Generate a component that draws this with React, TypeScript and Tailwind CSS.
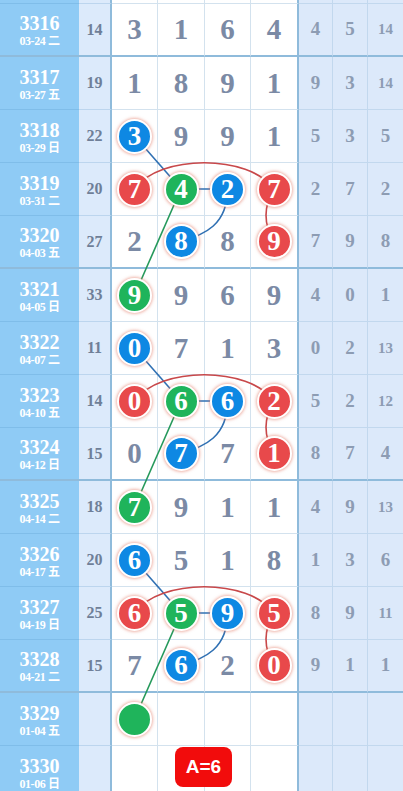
import React from 'react';

type Row = {
  id: string;
  date: string;
  sum: number | null;
  nums: (number | null)[];
  balls: string[];
  tail: number[];
};

const ROWS: Row[] = [
  { id: '3316', date: '03-24 二', sum: 14, nums: [3, 1, 6, 4], balls: ['', '', '', ''], tail: [4, 5, 14] },
  { id: '3317', date: '03-27 五', sum: 19, nums: [1, 8, 9, 1], balls: ['', '', '', ''], tail: [9, 3, 14] },
  { id: '3318', date: '03-29 日', sum: 22, nums: [3, 9, 9, 1], balls: ['b', '', '', ''], tail: [5, 3, 5] },
  { id: '3319', date: '03-31 二', sum: 20, nums: [7, 4, 2, 7], balls: ['r', 'g', 'b', 'r'], tail: [2, 7, 2] },
  { id: '3320', date: '04-03 五', sum: 27, nums: [2, 8, 8, 9], balls: ['', 'b', '', 'r'], tail: [7, 9, 8] },
  { id: '3321', date: '04-05 日', sum: 33, nums: [9, 9, 6, 9], balls: ['g', '', '', ''], tail: [4, 0, 1] },
  { id: '3322', date: '04-07 二', sum: 11, nums: [0, 7, 1, 3], balls: ['b', '', '', ''], tail: [0, 2, 13] },
  { id: '3323', date: '04-10 五', sum: 14, nums: [0, 6, 6, 2], balls: ['r', 'g', 'b', 'r'], tail: [5, 2, 12] },
  { id: '3324', date: '04-12 日', sum: 15, nums: [0, 7, 7, 1], balls: ['', 'b', '', 'r'], tail: [8, 7, 4] },
  { id: '3325', date: '04-14 二', sum: 18, nums: [7, 9, 1, 1], balls: ['g', '', '', ''], tail: [4, 9, 13] },
  { id: '3326', date: '04-17 五', sum: 20, nums: [6, 5, 1, 8], balls: ['b', '', '', ''], tail: [1, 3, 6] },
  { id: '3327', date: '04-19 日', sum: 25, nums: [6, 5, 9, 5], balls: ['r', 'g', 'b', 'r'], tail: [8, 9, 11] },
  { id: '3328', date: '04-21 二', sum: 15, nums: [7, 6, 2, 0], balls: ['', 'b', '', 'r'], tail: [9, 1, 1] },
  { id: '3329', date: '01-04 五', sum: null, nums: [null, null, null, null], balls: ['g', '', '', ''], tail: [] },
  { id: '3330', date: '01-06 日', sum: null, nums: [null, null, null, null], balls: ['', '', '', ''], tail: [] },
];

const serif = { fontFamily: '"Liberation Serif", "Noto Sans CJK SC", serif' };

const ballBg: Record<string, string> = {
  b: 'bg-[#0e88e3]',
  r: 'bg-[#e8494b]',
  g: 'bg-[#1fb45b]',
};

const mainW = ['w-[46px]', 'w-[47px]', 'w-[46px]', 'w-[48px]'];
const tailW = ['w-[34px]', 'w-[35px]', 'w-[35px]'];

// column centres and row centres for the connector overlay
const X = [134.5, 181, 227.5, 274];
const cy = (i: number) => 4 + 53 * i + 26;

function Connectors() {
  const groups = [0, 1, 2];
  return (
    <svg className="pointer-events-none absolute left-0 top-0 z-[5]" width={403} height={791}>
      {groups.map((k) => {
        const r0 = 2 + 4 * k;
        const y0 = cy(r0);
        const y1 = cy(r0 + 1);
        const y2 = cy(r0 + 2);
        const y3 = cy(r0 + 3);
        return (
          <g key={k} fill="none" strokeWidth={1.6}>
            <line x1={X[0]} y1={y0} x2={X[1]} y2={y1} stroke="#2f70b3" />
            <line x1={X[1]} y1={y1} x2={X[2]} y2={y1} stroke="#2f70b3" />
            <path d={`M${X[2]},${y1} C${X[2]},${y1 + 36} ${X[1] + 24},${y2 - 8} ${X[1]},${y2}`} stroke="#2f70b3" />
            <path d={`M${X[0]},${y1} C${X[0] + 25},${y1 - 35} ${X[3] - 25},${y1 - 35} ${X[3]},${y1}`} stroke="#c8484a" />
            <path d={`M${X[3]},${y1} Q${X[3] - 16},${y1 + 26} ${X[3]},${y2}`} stroke="#c8484a" />
            <line x1={X[1]} y1={y1} x2={X[0]} y2={y3} stroke="#25995b" />
          </g>
        );
      })}
    </svg>
  );
}

function Ball({ color, n }: { color: string; n: number | null }) {
  return (
    <div
      className={`relative z-10 flex h-[35px] w-[35px] items-center justify-center rounded-full border-2 border-white shadow-[0_0_3px_1px_rgba(226,120,100,0.55)] ${ballBg[color]}`}
    >
      {n !== null && (
        <span className="text-[27px] font-bold leading-none text-white" style={serif}>
          {n}
        </span>
      )}
    </div>
  );
}

function TableRow({ row, idx }: { row: Row; idx: number }) {
  const thick = idx % 4 === 0;
  const bb = thick ? 'border-b-2 border-b-[#8fbbdb]' : 'border-b';
  return (
    <div className="relative flex h-[53px]">
      <div
        className={`flex w-[79px] flex-col items-center justify-center bg-[#8fcbf5] pt-[1px] text-white ${bb} ${thick ? '' : 'border-b-[#7fbde9]'}`}
        style={serif}
      >
        <span className="text-[20px] font-bold leading-[22px]">{row.id}</span>
        <span className="text-[12px] font-bold leading-[14px] tracking-[-0.4px]">{row.date}</span>
      </div>
      <div
        className={`flex w-[33px] items-center justify-center border-r-2 border-r-[#8fbbdb] bg-[#dceafb] ${bb} ${thick ? '' : 'border-b-[#bcd5ee]'}`}
      >
        <span className="text-[16px] font-bold text-[#6f7f98]" style={serif}>
          {row.sum ?? ''}
        </span>
      </div>
      {row.nums.map((n, c) => (
        <div
          key={c}
          className={`flex ${mainW[c]} items-center justify-center bg-white ${c === 3 ? 'border-r-2 border-r-[#8fbbdb]' : 'border-r border-r-[#d3e2ee]'} ${bb} ${thick ? '' : 'border-b-[#d3e2ee]'}`}
        >
          {row.balls[c] ? (
            <Ball color={row.balls[c]} n={n} />
          ) : (
            <span className="text-[29px] font-bold leading-none text-[#7b8aa5]" style={serif}>
              {n ?? ''}
            </span>
          )}
        </div>
      ))}
      {[0, 1, 2].map((c) => {
        const v = row.tail[c];
        return (
          <div
            key={c}
            className={`flex ${tailW[c]} items-center justify-center bg-[#dce9fa] ${c < 2 ? 'border-r border-r-[#c2d8ee]' : ''} ${bb} ${thick ? '' : 'border-b-[#c2d8ee]'}`}
          >
            <span
              className={`font-bold text-[#8d9cb3] ${v !== undefined && v >= 10 ? 'text-[15px]' : 'text-[19px]'}`}
              style={serif}
            >
              {v ?? ''}
            </span>
          </div>
        );
      })}
      {row.id === '3330' && (
        <div className="absolute left-[175px] top-[1px] z-10 flex h-[40px] w-[57px] items-center justify-center rounded-lg bg-[#f20c0c]">
          <span className="text-[19px] font-bold text-white" style={{ fontFamily: '"Liberation Sans", Arial, sans-serif' }}>
            A=6
          </span>
        </div>
      )}
    </div>
  );
}

export default function App() {
  return (
    <div className="relative h-[791px] w-[403px] overflow-hidden bg-white">
      <div className="flex h-[4px]">
        <div className="w-[79px] border-b border-b-[#7fbde9] bg-[#8fcbf5]" />
        <div className="w-[33px] border-b border-r-2 border-b-[#bcd5ee] border-r-[#8fbbdb] bg-[#dceafb]" />
        {mainW.map((w, c) => (
          <div
            key={c}
            className={`${w} border-b border-b-[#d3e2ee] bg-white ${c === 3 ? 'border-r-2 border-r-[#8fbbdb]' : 'border-r border-r-[#d3e2ee]'}`}
          />
        ))}
        {tailW.map((w, c) => (
          <div key={c} className={`${w} border-b border-b-[#c2d8ee] bg-[#dce9fa] ${c < 2 ? 'border-r border-r-[#c2d8ee]' : ''}`} />
        ))}
      </div>
      {ROWS.map((row, i) => (
        <TableRow key={row.id} row={row} idx={i} />
      ))}
      <Connectors />
    </div>
  );
}
